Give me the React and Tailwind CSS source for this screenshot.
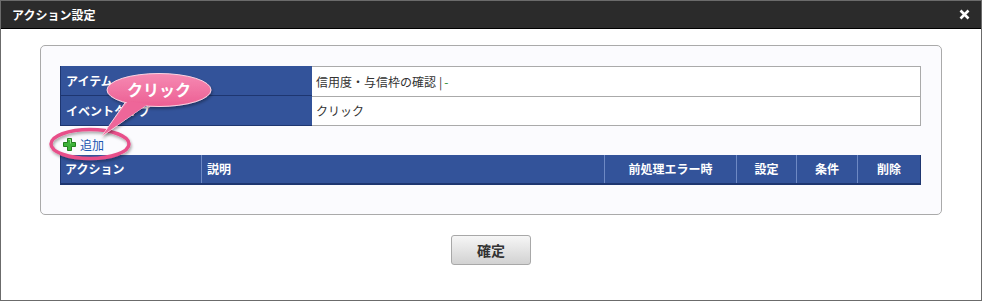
import React from 'react';

const jp = { fontFamily: '"Noto Sans CJK JP", "Noto Sans", sans-serif' };

const PlusIcon = () => (
  <svg width="13" height="13" viewBox="0 0 13 13">
    <path d="M4.5 0.5h4v4h4v4h-4v4h-4v-4h-4v-4h4z" fill="#3fb23a" stroke="#23801f" strokeWidth="1" />
    <path d="M5.5 1.5h2v4" stroke="#8fe08a" strokeWidth="1" fill="none" />
  </svg>
);

const Callout = () => (
  <svg className="absolute left-0 top-0 pointer-events-none" width="982" height="301" viewBox="0 0 982 301">
    <defs>
      <linearGradient id="pink" x1="0" y1="0" x2="0" y2="1">
        <stop offset="0" stopColor="#f68ab3" />
        <stop offset="1" stopColor="#ec5f93" />
      </linearGradient>
      <filter id="sh" x="-20%" y="-20%" width="140%" height="160%">
        <feDropShadow dx="1" dy="2" stdDeviation="1.5" floodColor="#000" floodOpacity="0.35" />
      </filter>
    </defs>
    <ellipse cx="89" cy="143" rx="39" ry="14.5" fill="none" stroke="#e8508a" strokeWidth="3.5" filter="url(#sh)" />
    <g filter="url(#sh)">
      <path d="M126 99 L101 135 L148 102 Z" fill="url(#pink)" stroke="#fbd3e2" strokeWidth="1" />
      <ellipse cx="158" cy="89" rx="52" ry="16.5" fill="url(#pink)" stroke="#fbd3e2" strokeWidth="1" />
      <path d="M127 100 L102 134 L147 103 Z" fill="#ee6699" />
    </g>
    <text x="158" y="95" textAnchor="middle" fill="#fff" fontSize="16" fontWeight="bold" style={jp}>クリック</text>
  </svg>
);

const headCls = 'h-full flex items-center text-white text-[12px] font-bold bg-[#33539a] border-r border-[#6e89c4]';

export default function App() {
  return (
    <div className="relative w-[982px] h-[301px] bg-white border border-[#6b6b6b] flex flex-col" style={jp}>
      {/* Title bar */}
      <div className="h-[28px] bg-[#2b2b2b] border-b border-black flex items-center justify-between pl-[11px] pr-[11px]">
        <span className="text-white text-[12px] font-bold">アクション設定</span>
        <svg width="11" height="11" viewBox="0 0 11 11">
          <path d="M1.5 1.5l8 8M9.5 1.5l-8 8" stroke="#fff" strokeWidth="2.6" />
        </svg>
      </div>

      <div className="px-[39px] pt-[16px]">
        <div className="border border-[#aaaaaa] rounded-[5px] bg-[#fbfbfe] pl-[19px] pr-[20px] pt-[20px] pb-[29px]">
          {/* Item table */}
          <div className="text-[12px] text-[#333]">
            <div className="flex h-[30px]">
              <div className="w-[252px] h-full flex items-center pl-[5px] bg-[#33539a] text-white font-bold border-l border-b border-[#1e3670]">アイテム</div>
              <div className="flex-1 h-full flex items-center pl-[4px] bg-white border-t border-r border-[#aaaaaa]">
                信用度・与信枠の確認 <span className="ml-[3px] text-[#333]">|</span><span className="ml-[2px] text-[#2a8a2a]">-</span>
              </div>
            </div>
            <div className="flex h-[30px]">
              <div className="w-[252px] h-full flex items-center pl-[5px] bg-[#33539a] text-white font-bold border-l border-b border-[#1e3670]">イベントタイプ</div>
              <div className="flex-1 h-full flex items-center pl-[4px] bg-white border-t border-r border-b border-[#aaaaaa]">クリック</div>
            </div>
          </div>

          {/* Add link */}
          <div className="h-[29px] flex items-center pt-[8px] pl-[3px] gap-[4px]">
            <PlusIcon />
            <span className="text-[12px] text-[#1a55b0]">追加</span>
          </div>

          {/* Action table header */}
          <div className="flex h-[30px] border-l border-b-2 border-[#1e3670] bg-[#33539a]">
            <div className={`${headCls} w-[141px] pl-[4px]`}>アクション</div>
            <div className={`${headCls} w-[403px] pl-[5px]`}>説明</div>
            <div className={`${headCls} w-[132px] justify-center`}>前処理エラー時</div>
            <div className={`${headCls} w-[60px] justify-center`}>設定</div>
            <div className={`${headCls} w-[61px] justify-center`}>条件</div>
            <div className="h-full flex items-center justify-center text-white text-[12px] font-bold flex-1 border-r border-[#1e3670]">削除</div>
          </div>
        </div>
      </div>

      <div className="flex justify-center pt-[20px]">
        <button className="w-[80px] h-[30px] rounded-[3px] border border-[#a8a8a8] bg-gradient-to-b from-[#f6f6f6] to-[#d2d2d2] text-[14px] font-bold text-[#333]">
          確定
        </button>
      </div>

      <Callout />
    </div>
  );
}
